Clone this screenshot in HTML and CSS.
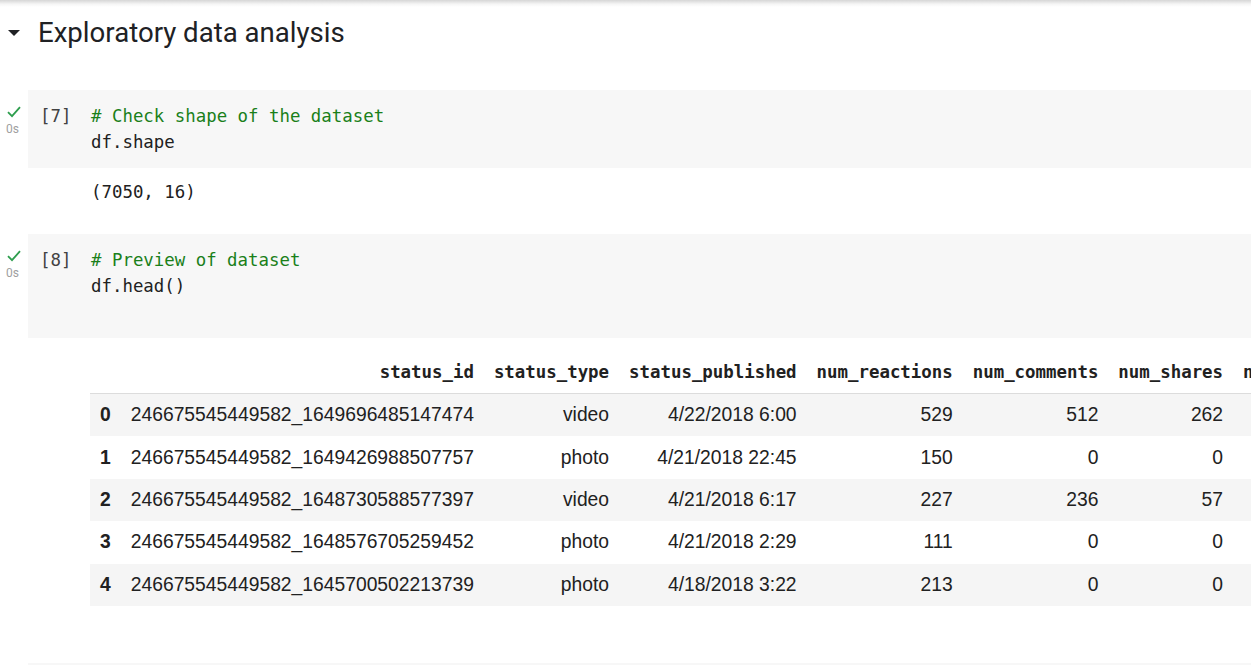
FILE: index.html
```html
<!DOCTYPE html>
<html>
<head>
<meta charset="utf-8">
<link rel="stylesheet" href="styles.css">
</head>
<body>
<div class="topshade"></div>
<div class="section-head">
  <span class="caret"></span>
  <h1 class="title">Exploratory data analysis</h1>
</div>

<div class="cell cell-first">
  <div class="gutter">
    <svg class="check" width="14" height="12" viewBox="0 0 14 12"><path d="M1 6.2 L5 10.2 L13 1.2" fill="none" stroke="#2e9e4e" stroke-width="1.8"/></svg>
    <span class="dur">0s</span>
  </div>
  <div class="cell-body">
    <span class="count">[7]</span>
    <div class="code">
      <div class="line"><span class="cm"># Check shape of the dataset</span></div>
      <div class="line">df.shape</div>
    </div>
  </div>
</div>
<div class="output text-out">(7050, 16)</div>

<div class="cell cell-second">
  <div class="gutter">
    <svg class="check" width="14" height="12" viewBox="0 0 14 12"><path d="M1 6.2 L5 10.2 L13 1.2" fill="none" stroke="#2e9e4e" stroke-width="1.8"/></svg>
    <span class="dur">0s</span>
  </div>
  <div class="cell-body">
    <span class="count">[8]</span>
    <div class="code">
      <div class="line"><span class="cm"># Preview of dataset</span></div>
      <div class="line">df.head()</div>
      <div class="line"></div>
    </div>
  </div>
</div>

<div class="output table-out">
  <table class="df">
    <thead>
      <tr><th></th><th>status_id</th><th>status_type</th><th>status_published</th><th>num_reactions</th><th>num_comments</th><th>num_shares</th><th>num_likes</th><th>num_loves</th></tr>
    </thead>
    <tbody>
      <tr><th>0</th><td>246675545449582_1649696485147474</td><td>video</td><td>4/22/2018 6:00</td><td>529</td><td>512</td><td>262</td><td>432</td><td>92</td></tr>
      <tr><th>1</th><td>246675545449582_1649426988507757</td><td>photo</td><td>4/21/2018 22:45</td><td>150</td><td>0</td><td>0</td><td>150</td><td>0</td></tr>
      <tr><th>2</th><td>246675545449582_1648730588577397</td><td>video</td><td>4/21/2018 6:17</td><td>227</td><td>236</td><td>57</td><td>204</td><td>21</td></tr>
      <tr><th>3</th><td>246675545449582_1648576705259452</td><td>photo</td><td>4/21/2018 2:29</td><td>111</td><td>0</td><td>0</td><td>111</td><td>0</td></tr>
      <tr><th>4</th><td>246675545449582_1645700502213739</td><td>photo</td><td>4/18/2018 3:22</td><td>213</td><td>0</td><td>0</td><td>204</td><td>9</td></tr>
    </tbody>
  </table>
</div>

<div class="cell next-cell"></div>
</body>
</html>
```

FILE: styles.css
```css
html, body {
  margin: 0;
  padding: 0;
  background: #ffffff;
  overflow: hidden;
}
body {
  width: 1251px;
  height: 665px;
  font-family: Roboto, "Liberation Sans", sans-serif;
  color: #202124;
}
.topshade {
  height: 7px;
  background: linear-gradient(#d6d6d6, #f6f6f6 60%, #ffffff);
}
.section-head {
  display: flex;
  align-items: center;
  height: 50px;
}
.caret {
  width: 0;
  height: 0;
  margin-left: 8px;
  margin-right: 18px;
  margin-top: 2px;
  border-left: 6.5px solid transparent;
  border-right: 6.5px solid transparent;
  border-top: 6.5px solid #202124;
}
.title {
  margin: 0;
  font-family: Roboto, "Liberation Sans", sans-serif;
  font-weight: 400;
  font-size: 27.6px;
  color: #202124;
}
.cell {
  display: flex;
  margin-top: 33px;
}
.cell-second {
  margin-top: 29px;
}
.gutter {
  width: 28px;
  flex: none;
  display: flex;
  flex-direction: column;
  align-items: center;
  padding-top: 16px;
  box-sizing: border-box;
}
.check {
  display: block;
  margin-left: -1px;
}
.dur {
  font-family: Roboto, "Liberation Sans", sans-serif;
  font-size: 12px;
  line-height: 14px;
  color: #a0a0a0;
  margin-top: 4px;
  margin-left: -3px;
}
.cell-body {
  flex: 1;
  display: flex;
  background: #f7f7f7;
  padding: 13px 0 13px 12px;
}
.count {
  width: 51px;
  flex: none;
  font-family: "DejaVu Sans Mono", monospace;
  font-size: 17.4px;
  line-height: 26px;
  color: #424242;
}
.code {
  font-family: "DejaVu Sans Mono", monospace;
  font-size: 17.4px;
  line-height: 26px;
  color: #212121;
}
.line {
  height: 26px;
  white-space: pre;
}
.cm {
  color: #1a801a;
}
.output {
  margin-left: 90px;
}
.text-out {
  font-family: "DejaVu Sans Mono", monospace;
  font-size: 17.4px;
  line-height: 26px;
  color: #212121;
  padding-top: 11px;
  padding-left: 1px;
}
.table-out {
  overflow: hidden;
  padding-top: 12px;
  height: 325px;
  box-sizing: border-box;
}
.df {
  border-collapse: collapse;
  white-space: nowrap;
  color: #212121;
}
.df thead th {
  font-family: "DejaVu Sans Mono", monospace;
  font-weight: bold;
  font-size: 17.4px;
  text-align: right;
  padding: 0 10px;
  height: 43px;
  border-bottom: 1px solid #dcdcdc;
}
.df tbody th {
  font-family: "Liberation Sans", Arial, sans-serif;
  font-weight: bold;
  font-size: 19.3px;
  text-align: left;
  padding: 0 10px;
}
.df td {
  font-family: "Liberation Sans", Arial, sans-serif;
  font-size: 19.3px;
  text-align: right;
  padding: 0 10px;
  height: 42.4px;
}
.df tbody tr:nth-child(odd) {
  background: #f5f5f5;
}
.next-cell {
  margin-top: 0;
  margin-left: 28px;
  height: 10px;
  background: #f7f7f7;
}
```
